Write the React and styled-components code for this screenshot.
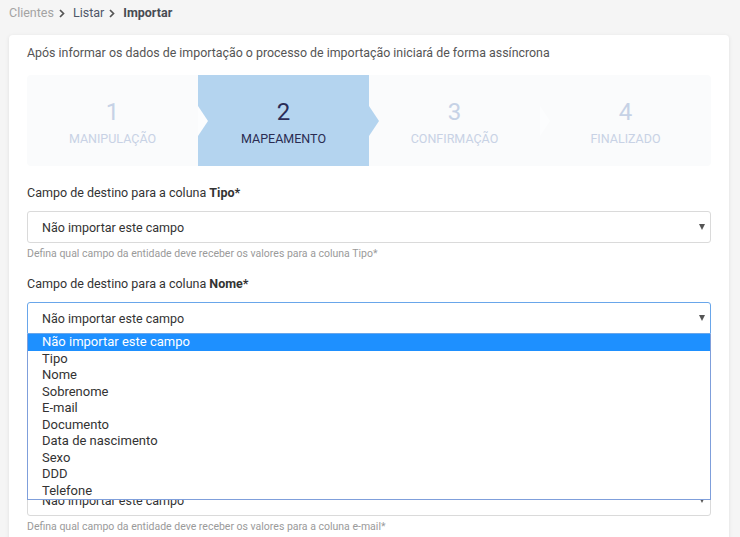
import React from 'react'
import styled, { createGlobalStyle } from 'styled-components'

const Global = createGlobalStyle`
  html, body {
    margin: 0;
    background: #f5f5f5;
    font-family: Roboto, "Noto Sans", Arial, sans-serif;
    color: #333;
    overflow: hidden;
  }
`

const Page = styled.div`
  padding: 3px 11px 0 9px;
`

const Crumbs = styled.div`
  display: flex;
  align-items: center;
  gap: 5px;
  height: 18px;
  font-size: 12.5px;
  line-height: 18px;
  margin-bottom: 13px;
  padding-top: 1px;
`

const Crumb = styled.span`
  color: ${p => (p.current ? '#474b52' : p.muted ? '#a3a3a3' : '#4e5768')};
  font-weight: ${p => (p.current ? 700 : 400)};
`

const Sep = styled.svg`
  width: 6px;
  height: 9px;
  margin-right: 3px;
  flex: none;
`

const Chevron = () => (
  <Sep viewBox="0 0 6 9">
    <path d="M1 1l3.5 3.5L1 8" fill="none" stroke="#555" strokeWidth="1.7" />
  </Sep>
)

const Card = styled.div`
  background: #fff;
  border-radius: 4px;
  box-shadow: 0 1px 4px rgba(0, 0, 0, 0.09);
  padding: 9px 18px 40px 18px;
  min-height: 560px;
`

const Intro = styled.p`
  margin: 0 0 13px;
  font-size: 12.4px;
  line-height: 18px;
  color: #555;
`

const Steps = styled.div`
  display: grid;
  grid-template-columns: repeat(4, 1fr);
  height: 91px;
  background: #fafbfc;
  border-radius: 4px;
  margin-bottom: 18px;
`

const Step = styled.div`
  position: relative;
  display: flex;
  flex-direction: column;
  align-items: center;
  justify-content: center;
  gap: 5px;
  padding-top: 3px;
  box-sizing: border-box;
  background: ${p => (p.active ? '#b4d4ef' : 'transparent')};

  &::after {
    content: ${p => (p.last ? 'none' : "''")};
    position: absolute;
    right: -10px;
    top: 50%;
    transform: translateY(-50%);
    width: 0;
    height: 0;
    border-top: 15px solid transparent;
    border-bottom: 15px solid transparent;
    border-left: 10px solid ${p => (p.active ? '#b4d4ef' : '#fcfdfe')};
    z-index: 1;
  }
`

const StepNum = styled.span`
  font-size: 24px;
  line-height: 28px;
  color: ${p => (p.active ? '#2a2c57' : '#c6d2e6')};
`

const StepLabel = styled.span`
  font-size: 12.5px;
  line-height: 15px;
  text-transform: uppercase;
  color: ${p => (p.active ? '#2a2c52' : '#c8d2e5')};
`

const Field = styled.div`
  margin-bottom: 14px;
`

const Label = styled.div`
  font-size: 12.5px;
  line-height: 18px;
  color: #333;
  margin-bottom: 9px;

  b {
    font-weight: 700;
  }
`

const SelectWrap = styled.div`
  position: relative;
`

const SelectBox = styled.div`
  height: 32px;
  box-sizing: border-box;
  border: 1px solid ${p => (p.open ? '#69a6ea' : '#dadada')};
  border-radius: ${p => (p.open ? '3px 3px 0 0' : '3px')};
  display: flex;
  align-items: center;
  justify-content: space-between;
  padding: 0 5px 0 14px;
  font-size: 12.5px;
  color: #333;
  background: #fff;
`

const Caret = styled.span`
  width: 0;
  height: 0;
  border-left: 3.5px solid transparent;
  border-right: 3.5px solid transparent;
  border-top: 6px solid #555;
`

const Help = styled.div`
  font-size: 10.5px;
  line-height: 14px;
  color: #9a9a9a;
  margin-top: 4px;
`

const Options = styled.ul`
  position: absolute;
  top: 100%;
  left: 0;
  right: 0;
  margin: 0;
  padding: 0;
  list-style: none;
  background: #fff;
  border: 1px solid #7f9fdb;
  border-top: none;
  z-index: 5;
`

const Option = styled.li`
  font-size: 13px;
  line-height: 16.5px;
  padding-left: 14px;
  background: ${p => (p.selected ? '#1e90ff' : 'transparent')};
  color: ${p => (p.selected ? '#fff' : '#333')};
`

const steps = ['Manipulação', 'Mapeamento', 'Confirmação', 'Finalizado']
const columns = ['Tipo', 'Nome', 'Sobrenome', 'e-mail']
const options = [
  'Não importar este campo',
  'Tipo',
  'Nome',
  'Sobrenome',
  'E-mail',
  'Documento',
  'Data de nascimento',
  'Sexo',
  'DDD',
  'Telefone',
]

export default function App() {
  const current = 1
  const openField = 1

  return (
    <Page>
      <Global />
      <Crumbs>
        <Crumb muted>Clientes</Crumb>
        <Chevron />
        <Crumb>Listar</Crumb>
        <Chevron />
        <Crumb current>Importar</Crumb>
      </Crumbs>

      <Card>
        <Intro>
          Após informar os dados de importação o processo de importação iniciará de forma assíncrona
        </Intro>

        <Steps>
          {steps.map((s, i) => (
            <Step key={s} active={i === current} last={i === steps.length - 1}>
              <StepNum active={i === current}>{i + 1}</StepNum>
              <StepLabel active={i === current}>{s}</StepLabel>
            </Step>
          ))}
        </Steps>

        {columns.map((col, i) => {
          const name = col === 'e-mail' ? 'E-mail' : col
          return (
            <Field key={col}>
              <Label>
                Campo de destino para a coluna <b>{name}*</b>
              </Label>
              <SelectWrap>
                <SelectBox open={i === openField}>
                  <span>Não importar este campo</span>
                  <Caret />
                </SelectBox>
                {i === openField && (
                  <Options>
                    {options.map((o, j) => (
                      <Option key={o} selected={j === 0}>
                        {o}
                      </Option>
                    ))}
                  </Options>
                )}
              </SelectWrap>
              <Help>Defina qual campo da entidade deve receber os valores para a coluna {col}*</Help>
            </Field>
          )
        })}
      </Card>
    </Page>
  )
}
